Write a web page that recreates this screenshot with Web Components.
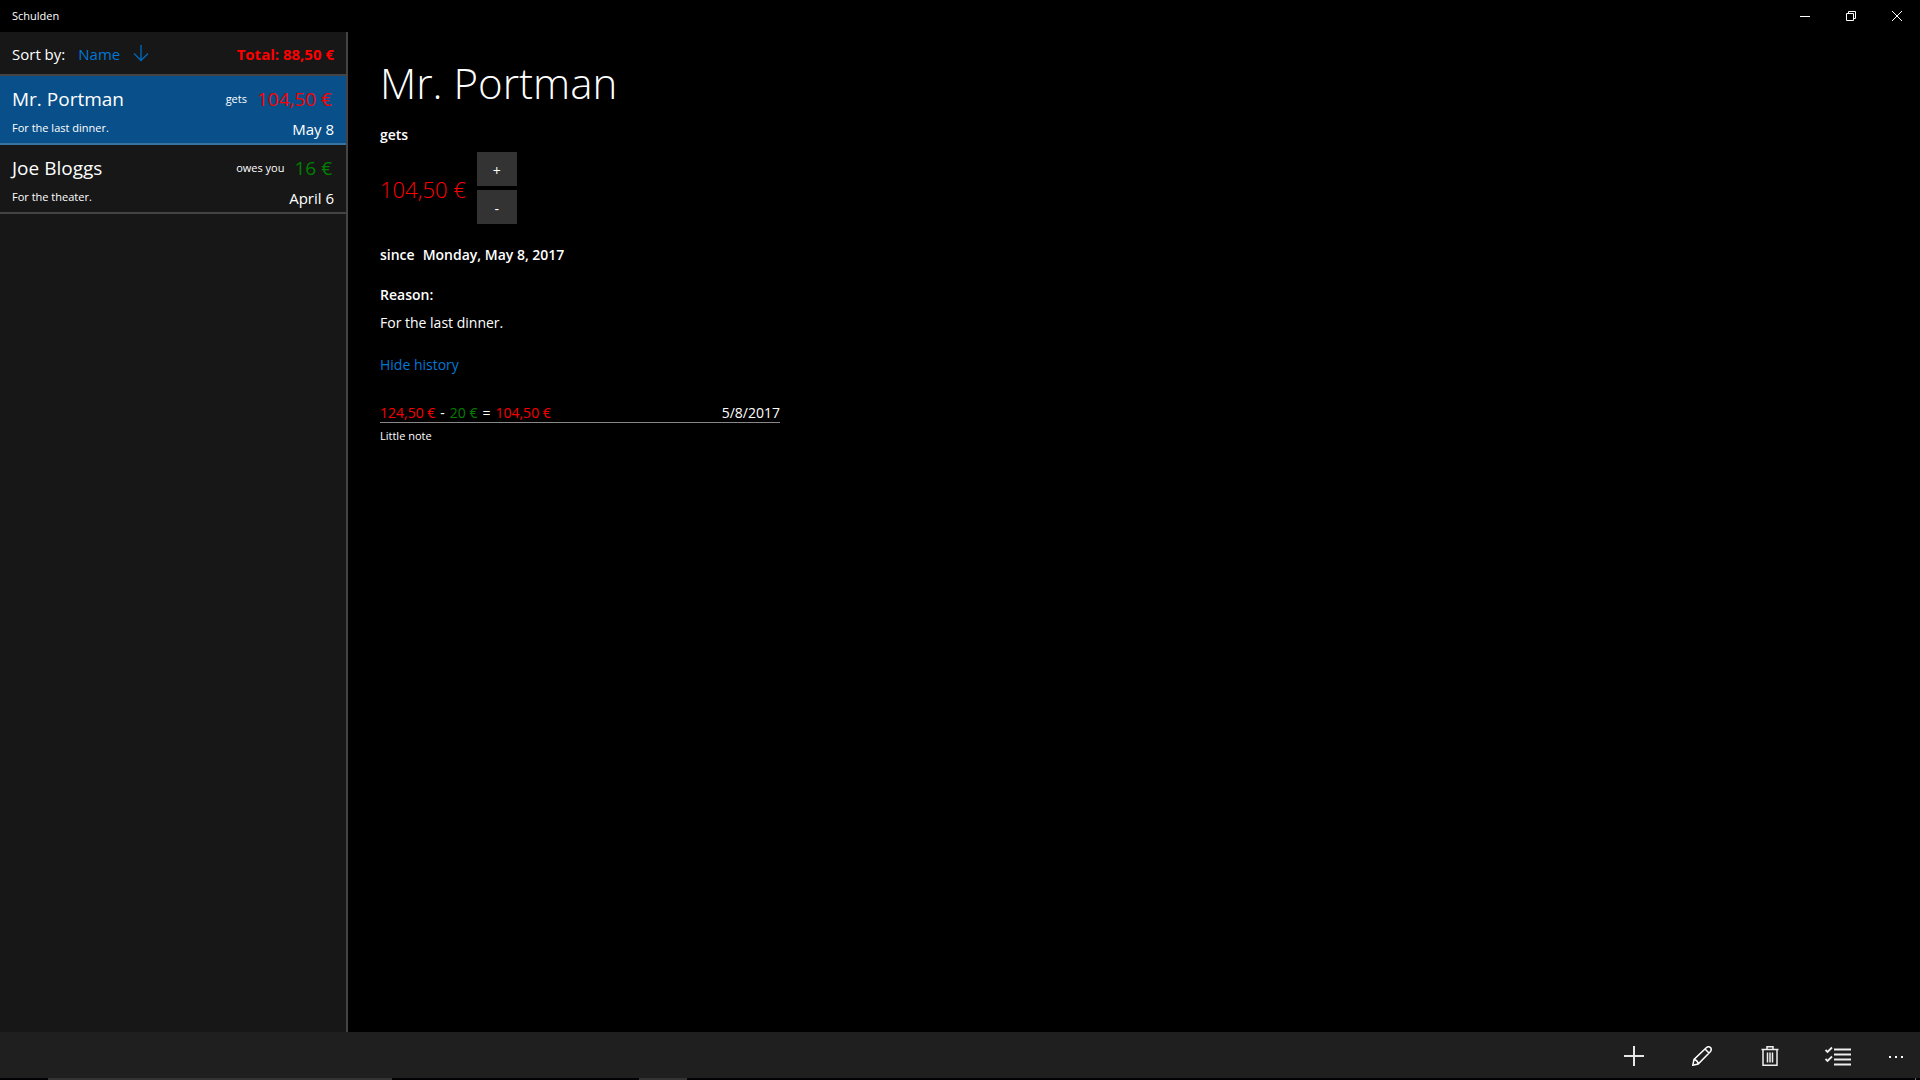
<!DOCTYPE html>
<html lang="en">
<head>
<meta charset="utf-8">
<title>Schulden</title>
<style>
  html, body { margin: 0; height: 100%; background: #000; }
  body { font-family: "Open Sans", "Noto Sans", sans-serif; font-size: 14px; line-height: 20px; color: #fff; }
</style>
</head>
<body>
<debt-app></debt-app>
<script>
const base = `
  :host, *, *::before { box-sizing: border-box; }
  button { font: inherit; color: inherit; background: none; border: 0; padding: 0; margin: 0; text-align: inherit; }
  h1, h2, p, ul { margin: 0; padding: 0; font: inherit; }
  svg { display: block; }
  .owe { color: #f80000; }
  .own { color: #008000; }
`;
function define(name, html) {
  const template = document.createElement('template');
  template.innerHTML = html;
  customElements.define(name, class extends HTMLElement {
    constructor() {
      super();
      this.attachShadow({ mode: 'open' }).append(template.content.cloneNode(true));
    }
  });
}

define('window-bar', `<style>${base}
  :host { display: flex; justify-content: space-between; height: 32px; font-size: 11px; }
  .name { padding-left: 12px; line-height: 32px; }
  .controls { display: flex; }
  button { width: 46px; display: grid; place-items: center; }
</style>
<span class="name"><slot></slot></span>
<div class="controls">
  <button aria-label="Minimize"><svg width="10" height="10" stroke="#fff"><path d="M0 5.5H10"/></svg></button>
  <button aria-label="Restore"><svg width="10" height="10" fill="none" stroke="#fff"><path d="M.5 2.5H7.5V9.5H.5ZM2.5 2.5V.5H9.5V7.5H7.5"/></svg></button>
  <button aria-label="Close"><svg width="10" height="10" stroke="#fff"><path d="M0 0 10 10M10 0 0 10"/></svg></button>
</div>`);

define('sort-header', `<style>${base}
  :host { display: flex; align-items: center; gap: 13px; height: 44px; padding: 2px 12px 0; border-bottom: 2px solid #444; font-size: 15px; }
  .key { color: #0078d7; }
  .total { margin-left: auto; font-weight: 700; color: #f00; }
</style>
<span>Sort by:</span>
<button class="key">Name</button>
<button aria-label="Sort direction"><svg width="16" height="20" fill="none" stroke="#0067b8" stroke-width="1.4"><path d="M8 1V16M1 9.500 8 16.400 15 9.500"/></svg></button>
<span class="total"><slot name="total"></slot></span>`);

define('debt-item', `<style>${base}
  :host { display: block; border-bottom: 2px solid #444; }
  :host([selected]) { background: #09508a; border-color: #3973a1; }
  button { display: flex; flex-direction: column; gap: 7px; width: 100%; padding: 9px 12px 5px; }
  .row { display: flex; width: 100%; }
  .top { align-items: center; gap: 10px; padding-right: 2px; font-size: 19px; line-height: 28px; }
  .bottom { justify-content: space-between; font-size: 15px; line-height: 18px; }
  .name { margin-right: auto; }
  .small { font-size: 11px; line-height: 16px; }
</style>
<button>
  <span class="row top"><span class="name"><slot name="name"></slot></span><span class="small"><slot name="kind"></slot></span><slot name="amount"></slot></span>
  <span class="row bottom"><span class="small"><slot name="note"></slot></span><slot name="date"></slot></span>
</button>`);

define('debt-list', `<style>${base}
  :host { display: block; width: 348px; flex: none; background: #171717; border-right: 2px solid #444; }
</style>
<sort-header><span slot="total">Total: 88,50 €</span></sort-header>
<debt-item selected><span slot="name">Mr. Portman</span><span slot="kind">gets</span><span slot="amount" class="owe">104,50 €</span><span slot="note">For the last dinner.</span><span slot="date">May 8</span></debt-item>
<debt-item><span slot="name">Joe Bloggs</span><span slot="kind">owes you</span><span slot="amount" class="own">16 €</span><span slot="note">For the theater.</span><span slot="date">April 6</span></debt-item>`);

define('history-entry', `<style>${base}
  :host { display: block; max-width: 400px; }
  .line { display: flex; justify-content: space-between; padding-top: 2px; line-height: 18px; border-bottom: 1px solid #888; }
  .sum { display: flex; gap: 5px; }
  .note { font-size: 11px; line-height: 16px; margin-top: 5px; }
</style>
<div class="line"><span class="sum"><slot name="sum"></slot></span><slot name="date"></slot></div>
<p class="note"><slot name="note"></slot></p>`);

define('debt-detail', `<style>${base}
  :host { display: block; flex: 1; padding: 21px 32px; }
  h1 { font-size: 42px; font-weight: 300; line-height: 60px; }
  h2, .strong { font-weight: 600; }
  .kind { margin-top: 12px; }
  .amount { display: flex; align-items: center; gap: 11px; margin-top: 7px; }
  .value { font-size: 22px; font-weight: 300; line-height: 32px; padding-top: 2px; color: #f00; }
  .steps { display: grid; gap: 4px; }
  .steps button { width: 40px; height: 34px; padding-top: 3px; background: #333; text-align: center; }
  .since { display: flex; gap: 8px; margin-top: 21px; }
  .reason { margin-top: 20px; }
  .text { margin-top: 8px; }
  .link { display: block; color: #0078d7; margin-top: 22px; }
  history-entry { margin-top: 27px; }
</style>
<h1>Mr. Portman</h1>
<h2 class="kind">gets</h2>
<div class="amount"><span class="value">104,50 €</span><div class="steps"><button>+</button><button>-</button></div></div>
<p class="since strong"><span>since</span><span>Monday, May 8, 2017</span></p>
<h2 class="reason">Reason:</h2>
<p class="text">For the last dinner.</p>
<button class="link">Hide history</button>
<history-entry><span slot="sum" class="owe">124,50 €</span><span slot="sum">-</span><span slot="sum" class="own">20 €</span><span slot="sum">=</span><span slot="sum" class="owe">104,50 €</span><span slot="date">5/8/2017</span><span slot="note">Little note</span></history-entry>`);

define('command-bar', `<style>${base}
  :host { display: flex; justify-content: flex-end; height: 46px; padding-top: 2px; background: #1f1f1f; }
  button { width: 68px; display: grid; place-items: center; }
  .more { width: 48px; }
</style>
<button aria-label="Add"><svg width="20" height="20" stroke="#e6e6e6" stroke-width="2"><path d="M10 0V20M0 10H20"/></svg></button>
<button aria-label="Edit"><svg width="20" height="20" fill="none" stroke="#fff" stroke-width="1.5"><path d="M.8 19.200 2 13.500 14.500 1.500Q16.500 0 18.500 1.500Q20 3.500 18.500 5.500L6.200 18ZM2 13.500Q5.500 14 6.200 18M13 3 17 7"/></svg></button>
<button aria-label="Delete"><svg width="18" height="20" fill="none" stroke="#eee" stroke-width="1.5"><path d="M.5 3.500H17.500M2 3.500V19.200H16V3.500M6 3.500V.8H12V3.500M6.500 6.500V16.500M9 6.500V16.500M11.500 6.500V16.500"/></svg></button>
<button aria-label="Select"><svg width="26" height="20" fill="none" stroke="#eee" stroke-width="1.8"><path d="M9 3.500H26M9 8.500H26M9 13.500H26M9 18.500H26M.5 4 2.500 6 7 1.500M.5 13 2.500 15 7 10.500"/></svg></button>
<button class="more" aria-label="More"><svg width="16" height="4" fill="#fff"><path d="M1 2h2v2H1zM7 2h2v2H7zM13 2h2v2h-2z"/></svg></button>`);

define('task-edge', `<style>
  :host { display: flex; height: 2px; background: #020204; }
  i { background: #333; }
  .wide { margin-left: 48px; width: 344px; }
  .short { margin-left: 247px; width: 48px; }
  .end { margin-left: auto; margin-right: 4px; width: 1px; background: #666; }
</style><i class="wide"></i><i class="short"></i><i class="end"></i>`);

define('debt-app', `<style>
  :host { display: flex; flex-direction: column; min-height: 100vh; }
  main { display: flex; flex: 1; }
</style>
<window-bar>Schulden</window-bar>
<main><debt-list></debt-list><debt-detail></debt-detail></main>
<command-bar></command-bar>
<task-edge></task-edge>`);
</script>
</body>
</html>
